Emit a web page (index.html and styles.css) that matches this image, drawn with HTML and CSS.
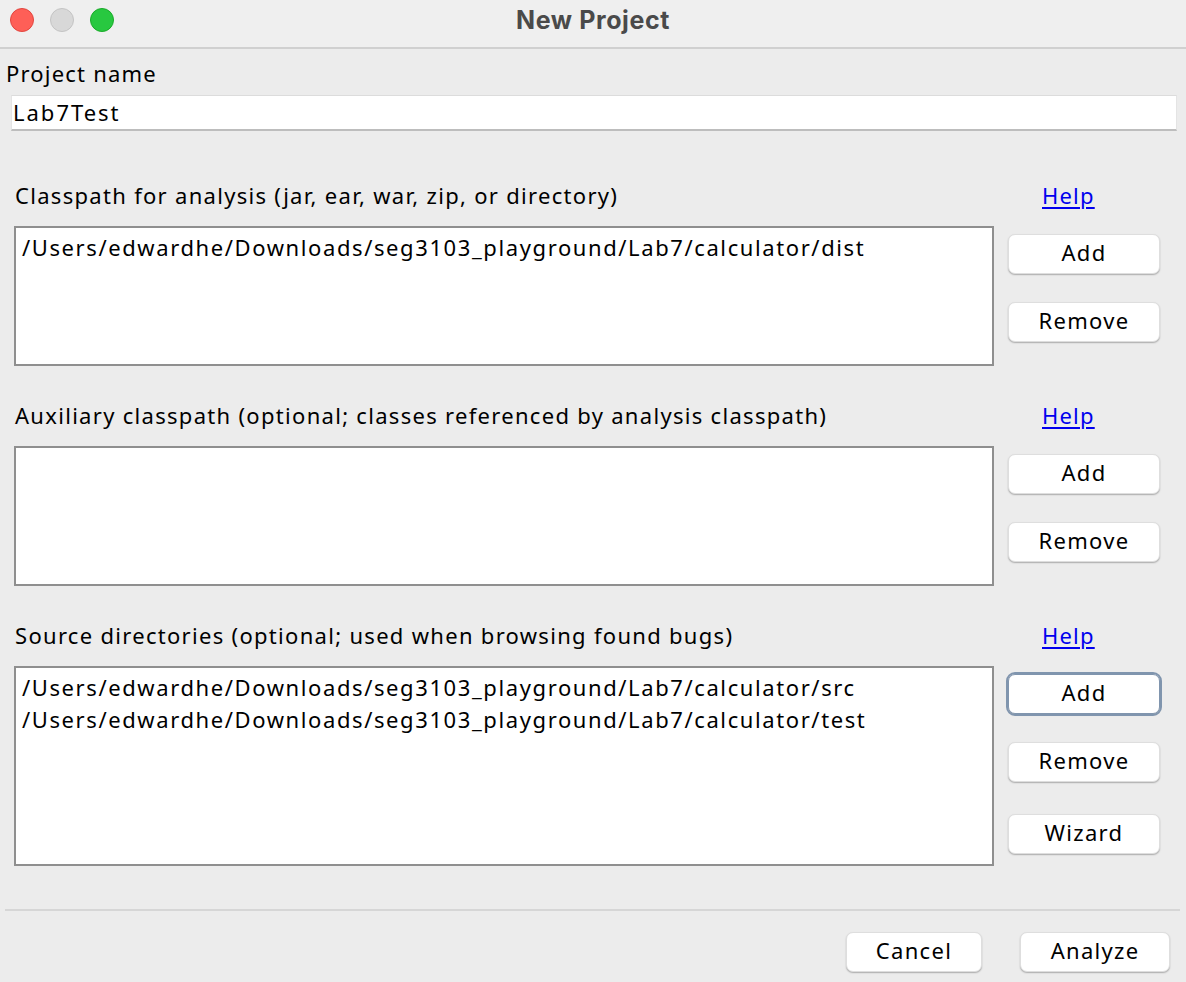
FILE: index.html
```html
<!DOCTYPE html>
<html>
<head>
<meta charset="utf-8">
<title>New Project</title>
<link rel="stylesheet" href="styles.css">
</head>
<body>
<div class="window">
  <div class="titlebar">
    <div class="lights">
      <span class="light red"></span>
      <span class="light gray"></span>
      <span class="light green"></span>
    </div>
    <div class="title">New Project</div>
  </div>
  <div class="content">
    <div class="name-label">Project name</div>
    <div class="name-field">Lab7Test</div>

    <div class="section first">
      <div class="sec-label">Classpath for analysis (jar, ear, war, zip, or directory)</div>
      <div class="help-cell"><a class="help" href="#">Help</a></div>
      <div class="listbox short">
        <div class="item">/Users/edwardhe/Downloads/seg3103_playground/Lab7/calculator/dist</div>
      </div>
      <div class="buttons">
        <button class="btn">Add</button>
        <button class="btn">Remove</button>
      </div>
    </div>

    <div class="section">
      <div class="sec-label">Auxiliary classpath (optional; classes referenced by analysis classpath)</div>
      <div class="help-cell"><a class="help" href="#">Help</a></div>
      <div class="listbox short"></div>
      <div class="buttons">
        <button class="btn">Add</button>
        <button class="btn">Remove</button>
      </div>
    </div>

    <div class="section">
      <div class="sec-label">Source directories (optional; used when browsing found bugs)</div>
      <div class="help-cell"><a class="help" href="#">Help</a></div>
      <div class="listbox tall">
        <div class="item">/Users/edwardhe/Downloads/seg3103_playground/Lab7/calculator/src</div>
        <div class="item">/Users/edwardhe/Downloads/seg3103_playground/Lab7/calculator/test</div>
      </div>
      <div class="buttons">
        <button class="btn focused">Add</button>
        <button class="btn">Remove</button>
        <button class="btn wizard">Wizard</button>
      </div>
    </div>

    <div class="separator"></div>
    <div class="footer">
      <button class="btn cancel">Cancel</button>
      <button class="btn analyze">Analyze</button>
    </div>
  </div>
</div>
</body>
</html>
```
FILE: styles.css
```css
html, body {
  margin: 0;
  padding: 0;
  background: #ececec;
}
body {
  font-family: "Noto Sans", "Open Sans", sans-serif;
  font-size: 22px;
  letter-spacing: 1.6px;
  color: #000;
  width: 1186px;
  height: 982px;
  overflow: hidden;
}
.titlebar {
  position: relative;
  height: 47px;
  background: #efefef;
  border-bottom: 2px solid #d0d0d0;
  display: flex;
  align-items: center;
  justify-content: center;
}
.lights {
  position: absolute;
  left: 10px;
  top: 8px;
  display: flex;
  gap: 16px;
}
.light {
  width: 24px;
  height: 24px;
  border-radius: 50%;
  box-sizing: border-box;
}
.light.red { background: #fe5f57; border: 1px solid #e2463f; }
.light.gray { background: #d8d8d8; border: 1px solid #c4c4c4; }
.light.green { background: #28c840; border: 1px solid #1aab29; }
.title {
  font-family: "Inter", "Noto Sans", sans-serif;
  font-weight: 700;
  font-size: 25px;
  letter-spacing: 0.6px;
  color: #4a4a4a;
  margin-top: -8px;
}
.content {
  padding: 0 6px 0 5px;
}
.name-label {
  padding-left: 1px;
  height: 44px;
  line-height: 48px;
  letter-spacing: 1.2px;
}
.name-field {
  margin: 2px 3px 0 6px;
  height: 36px;
  box-sizing: border-box;
  background: #fff;
  border-top: 1px solid #dcdcdc;
  border-left: 1px solid #e4e4e4;
  border-right: 1px solid #e4e4e4;
  border-bottom: 2px solid #bdbdbd;
  line-height: 33px;
  padding-left: 1px;
  letter-spacing: 2px;
}
.section {
  display: grid;
  grid-template-columns: 980px 152px;
  column-gap: 14px;
  margin-left: 9px;
  margin-top: 36px;
}
.section.first {
  margin-top: 51px;
}
.sec-label {
  height: 30px;
  line-height: 26px;
  margin-left: 1px;
  margin-bottom: 14px;
  white-space: nowrap;
  letter-spacing: 1.3px;
}
.help-cell {
  padding-left: 34px;
  line-height: 26px;
}
.help {
  color: #0000ee;
  text-decoration: underline;
  text-underline-offset: 3px;
  letter-spacing: 1.2px;
}
.listbox {
  background: #fff;
  border: 2px solid #8f8f8f;
  box-sizing: border-box;
  padding: 3px 6px;
}
.listbox.short { height: 140px; }
.listbox.tall { height: 200px; }
.item {
  height: 32px;
  line-height: 32px;
  white-space: nowrap;
}
.buttons {
  display: flex;
  flex-direction: column;
  padding-top: 8px;
  gap: 28px;
}
.btn {
  font-family: "Noto Sans", "Open Sans", sans-serif;
  font-size: 22px;
  letter-spacing: 1.3px;
  color: #000;
  height: 40px;
  background: #fff;
  border: 1px solid #dedede;
  border-radius: 7px;
  box-shadow: 0 1px 1.5px rgba(0, 0, 0, 0.28);
  padding: 0 0 4px 0;
  margin: 0;
}
.buttons .btn {
  width: 152px;
}
.btn.focused {
  outline: 2px solid #8095ae;
  outline-offset: 0px;
  border-color: #8095ae;
}
.btn.wizard {
  margin-top: 4px;
}
.separator {
  margin-top: 43px;
  height: 2px;
  background: #d6d6d6;
}
.footer {
  display: flex;
  justify-content: flex-end;
  gap: 38px;
  margin-top: 21px;
  padding-right: 10px;
}
.btn.cancel { width: 136px; }
.btn.analyze { width: 150px; }
```
